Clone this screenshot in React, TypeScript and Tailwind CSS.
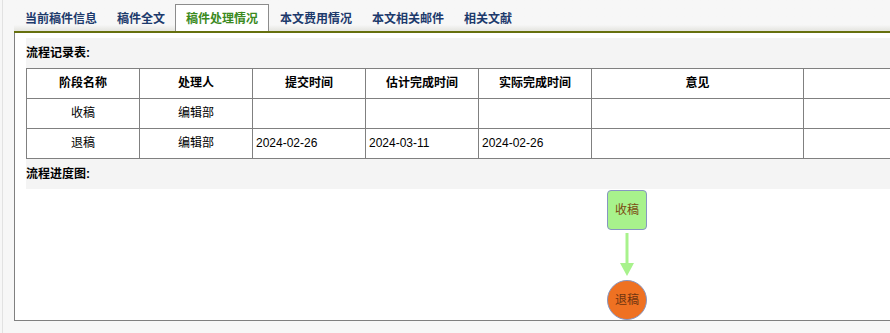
import * as React from "react";

const tabs = ["当前稿件信息", "稿件全文", "稿件处理情况", "本文费用情况", "本文相关邮件", "相关文献"];
const active = 2;

const headers = ["阶段名称", "处理人", "提交时间", "估计完成时间", "实际完成时间", "意见", ""];
const widths = ["w-[113px]", "w-[113px]", "w-[113px]", "w-[113px]", "w-[113px]", "w-[212px]", "w-[120px]"];

const rows = [
  ["收稿", "编辑部", "", "", "", "", ""],
  ["退稿", "编辑部", "2024-02-26", "2024-03-11", "2024-02-26", "", ""],
];

function Band({ children }: { children: React.ReactNode }) {
  return (
    <div className="flex h-[30px] items-center bg-[#f4f4f4] text-[12px] font-bold text-black">
      {children}
    </div>
  );
}

export default function App() {
  return (
    <div className="flex h-[333px] w-[890px] overflow-hidden bg-[#f7f7f7] font-['Liberation_Sans','Noto_Sans_CJK_SC',sans-serif] text-[12px]">
      <div className="w-[2px] shrink-0" />
      <div className="w-px shrink-0 bg-[#e2e2e2]" />
      <div className="ml-[11px] flex w-[1000px] shrink-0 flex-col">
        <div className="flex h-[33px] border-b-2 border-[#66700e] bg-linear-to-b from-[#f7f7f7] from-80% to-[#e4e4df] pl-px">
          {tabs.map((t, i) =>
            i === active ? (
              <div
                key={t}
                className="mt-[4px] mr-px flex h-[27px] items-center border border-b-0 border-[#8c8c8c] bg-white px-[10px] pt-[2px] font-bold text-[#3b8a1e]"
              >
                {t}
              </div>
            ) : (
              <div key={t} className="flex items-center px-[10px] pt-[6px] font-bold text-[#1d3a6c]">
                {t}
              </div>
            ),
          )}
        </div>
        <div className="flex h-[288px] flex-col border-b border-l border-[#808080] bg-white pt-[5px] pl-[11px]">
          <Band>流程记录表:</Band>
          <table className="w-[897px] table-fixed border-collapse self-start text-[12px] text-black">
            <thead>
              <tr className="h-[30px]">
                {headers.map((h, i) => (
                  <th key={i} className={`${widths[i]} border border-[#808080] p-0 text-center font-bold`}>
                    {h}
                  </th>
                ))}
              </tr>
            </thead>
            <tbody>
              {rows.map((r, ri) => (
                <tr key={ri} className="h-[30px]">
                  {r.map((c, ci) => (
                    <td
                      key={ci}
                      className={`border border-[#808080] p-0 ${ci < 2 ? "text-center" : "pl-[3px] text-left"}`}
                    >
                      {c}
                    </td>
                  ))}
                </tr>
              ))}
            </tbody>
          </table>
          <Band>流程进度图:</Band>
          <div className="relative h-[132px]">
            <div className="absolute top-px left-[581px] flex h-[40px] w-[40px] items-center justify-center rounded-[4px] border border-[#8796c2] bg-[#a8f28c] text-[12px] text-[#7b4a12]">
              收稿
            </div>
            <svg className="absolute top-[44px] left-[593px]" width="16" height="44" viewBox="0 0 16 44">
              <line x1="8" y1="0" x2="8" y2="31" stroke="#a8f28c" strokeWidth="3" />
              <polygon points="1,30 15,30 8,43" fill="#a8f28c" />
            </svg>
            <div className="absolute top-[91px] left-[581px] flex h-[40px] w-[40px] items-center justify-center rounded-full border border-[#8796c2] bg-[#ef7122] text-[12px] text-[#6e3410]">
              退稿
            </div>
          </div>
        </div>
      </div>
    </div>
  );
}
